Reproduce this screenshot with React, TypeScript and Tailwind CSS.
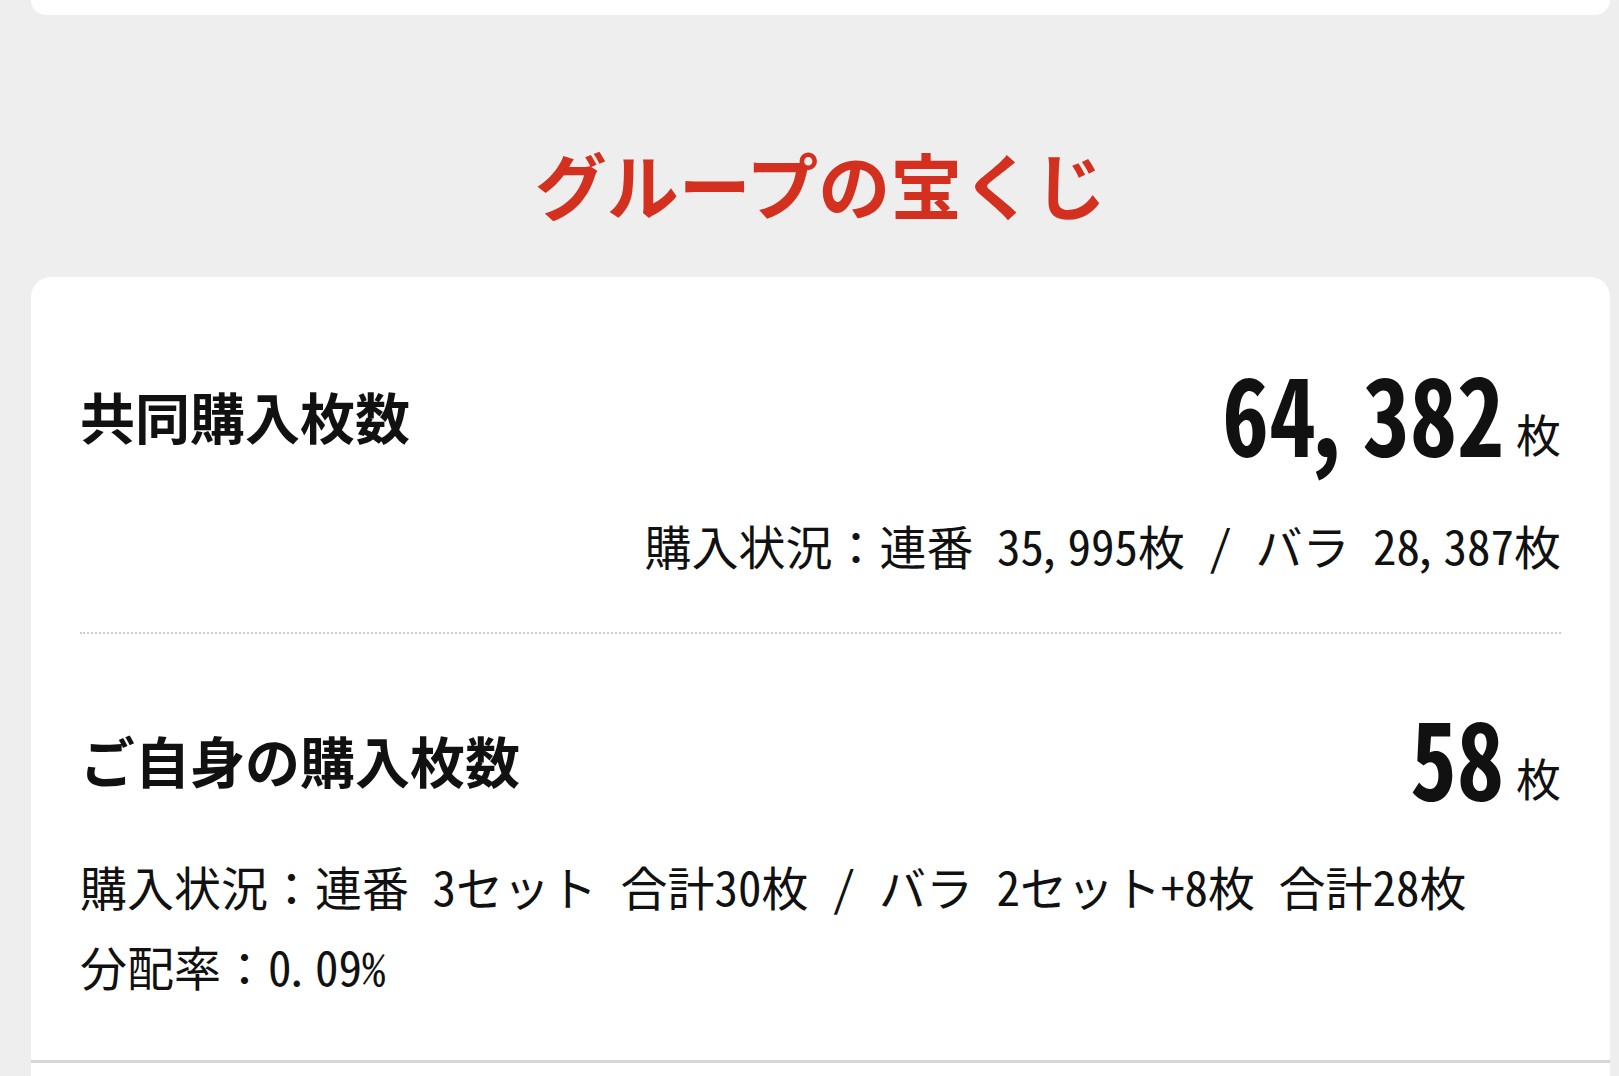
import React from 'react'

// half-width digits; comma/period sit left in their cell like the app font
const Num = ({ v }: { v: string }) => {
    return (
        <span className="[font-feature-settings:'hwid']">
            {v.split(/([,.])/).map((p, i) =>
                p === ',' || p === '.' ? (
                    <span key={i} className="-ml-[0.14em] mr-[0.14em]">{p}</span>
                ) : (
                    <React.Fragment key={i}>{p}</React.Fragment>
                )
            )}
        </span>
    )
}

// ascii runs get half-width forms, kana / kanji stay as they are
const Line = ({ text }: { text: string }) => {
    return (
        <>
            {text.split(/([\x20-\x7e]+)/).map((p, i) =>
                /^[\x20-\x7e]+$/.test(p) ? <Num key={i} v={p} /> : <React.Fragment key={i}>{p}</React.Fragment>
            )}
        </>
    )
}

const Row = ({ label, value }: { label: string; value: string }) => {
    return (
        <div className="flex items-center justify-between h-[110px]">
            <div className="text-[55px] font-bold leading-none">{label}</div>
            <div className="flex items-end mb-[10px]">
                <span className="inline-block origin-right scale-x-[0.87] text-[108px] font-bold leading-[0.8]">
                    <Num v={value} />
                </span>
                <span className="text-[45px] leading-none ml-[12px] -mb-[3px]">枚</span>
            </div>
        </div>
    )
}

const App = () => {
    return (
        <div className="h-[1076px] overflow-hidden bg-[#eeeeee] pl-[31px] pr-[9px] font-['Noto_Sans_CJK_JP',sans-serif] text-[#111111]">
            <div className="h-[15px] bg-white rounded-b-[20px]" />
            <h2 className="mt-[133px] mb-[59px] h-[70px] text-center text-[72px] font-bold leading-[70px] text-[#d3301f]">
                グループの宝くじ
            </h2>
            <div className="bg-white rounded-t-[20px] px-[49px] pt-[83px] h-[900px]">
                <div className="border-b-2 border-dotted border-[#cccccc] pb-[47px]">
                    <Row label="共同購入枚数" value="64,382" />
                    <div className="mt-[35px] text-right text-[47px] leading-[80px]">
                        <Line text="購入状況：連番 35,995枚 / バラ 28,387枚" />
                    </div>
                </div>
                <div className="pt-[70px] pb-[54px] border-b-[3px] border-[#d6d6d6] -mx-[49px] px-[49px]">
                    <Row label="ご自身の購入枚数" value="58" />
                    <div className="mt-[32px] text-[47px] leading-[80px]">
                        <p>
                            <Line text="購入状況：連番 3セット 合計30枚 / バラ 2セット+8枚 合計28枚" />
                        </p>
                        <p>
                            <Line text="分配率：0.09%" />
                        </p>
                    </div>
                </div>
            </div>
        </div>
    )
}

export default App
